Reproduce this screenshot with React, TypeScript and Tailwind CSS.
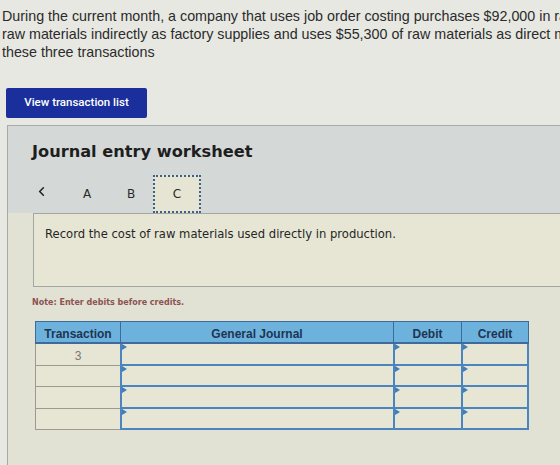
import { ChevronLeft } from "lucide-react";

const rows = [{ txn: "3" }, { txn: "" }, { txn: "" }, { txn: "" }];

// little pointer shown in the corner of every editable cell
function CellMark() {
  return (
    <svg className="absolute left-0 top-0" width="5" height="6" viewBox="0 0 5 6">
      <path d="M0 0 L5 3 L0 6 Z" fill="#3f7dbd" />
    </svg>
  );
}

function InputCell({ last }: { last?: boolean }) {
  return (
    <div
      className={`relative h-[21.5px] border-b-2 border-l-2 border-[#4b85bf] bg-[#e7e5d3] ${
        last ? "border-r-2" : ""
      }`}
    >
      <CellMark />
    </div>
  );
}

export default function App() {
  return (
    <div className="h-[465px] w-[560px] overflow-hidden bg-[#e7e8e2] font-['Liberation_Sans',sans-serif]">
      {/* Problem statement */}
      <div className="w-[700px] pl-[2px] pt-[7px] text-[14.3px] leading-[18px] text-[#2b2b2b]">
        <p className="whitespace-nowrap">During the current month, a company that uses job order costing purchases $92,000 in raw materials on account.</p>
        <p className="whitespace-nowrap">raw materials indirectly as factory supplies and uses $55,300 of raw materials as direct materials.</p>
        <p>these three transactions</p>
      </div>

      <button className="ml-[6px] mt-[27px] flex h-[30px] w-[141px] items-center justify-center rounded-[2px] bg-[#1b2f9c] font-['Roboto',sans-serif] text-[11.5px] font-medium text-white">
        View transaction list
      </button>

      {/* Worksheet panel */}
      <section className="ml-[7px] mt-[7px] h-[400px] border-l border-t border-[#a6aaaa] bg-[#e1e2d3]">
        <div className="h-[87px] bg-[#d4d8d7]">
          <h2 className="pl-[24px] pt-[15px] font-['DejaVu_Sans',sans-serif] text-[16.2px] font-bold leading-[21px] text-[#1e1e1e]">
            Journal entry worksheet
          </h2>
          <div className="mt-[13px] flex h-[38px] items-center pl-[26px] font-['DejaVu_Sans',sans-serif] text-[12px] text-[#2a2a2a]">
            <ChevronLeft size={15} strokeWidth={2.5} className="-mt-[6px] text-[#222]" />
            <span className="ml-[16px] w-[44px] text-center">A</span>
            <span className="w-[44px] text-center">B</span>
            <span className="flex h-[38px] w-[48px] items-center justify-center border-2 border-dotted border-[#3d5f8c] bg-[#e6e5d3]">
              C
            </span>
          </div>
        </div>

        <div className="ml-[25px] h-[74px] border-b border-l border-t border-[#a3a7a3] bg-[#e7e6d4] pl-[11px] pt-[12px] font-['DejaVu_Sans',sans-serif] text-[11.6px] text-[#262626]">
          Record the cost of raw materials used directly in production.
        </div>

        <p className="ml-[24px] mt-[10px] font-['DejaVu_Sans',sans-serif] text-[8px] font-bold text-[#8e5252]">
          Note: Enter debits before credits.
        </p>

        {/* Journal grid */}
        <div className="ml-[27px] mt-[12px] w-[494px] font-['Liberation_Sans',sans-serif]">
          <div className="grid h-[23px] grid-cols-[85px_273px_68px_68px] border-b-2 border-t border-[#3d6c9c] bg-[#6db2dd] text-[12px] font-bold text-[#1f3552]">
            <div className="border-l border-[#3d6c9c] pt-[3px] text-center">Transaction</div>
            <div className="border-l border-[#3d6c9c] pt-[3px] text-center">General Journal</div>
            <div className="border-l border-[#3d6c9c] pt-[3px] text-center">Debit</div>
            <div className="border-x border-[#3d6c9c] pt-[3px] text-center">Credit</div>
          </div>
          {rows.map((row, i) => (
            <div key={i} className="grid grid-cols-[85px_273px_68px_68px]">
              <div className="h-[21.5px] border-b border-l border-[#9c9c8e] bg-[#e7e5d3] pt-[3px] text-center text-[12px] text-[#777]">
                {row.txn}
              </div>
              <InputCell />
              <InputCell />
              <InputCell last />
            </div>
          ))}
        </div>
      </section>
    </div>
  );
}
